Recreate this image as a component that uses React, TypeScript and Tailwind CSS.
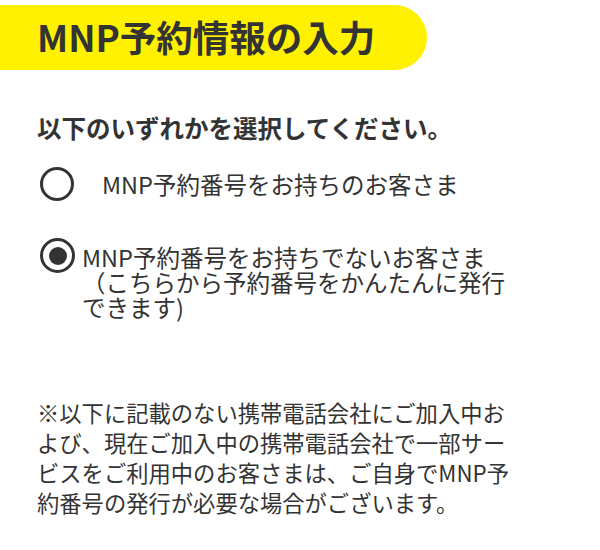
import React from "react";

const font = { fontFamily: '"Noto Sans CJK JP", "Noto Sans", sans-serif' };

export default function App() {
  return (
    <div className="w-[600px] h-[550px] bg-white text-[#333333] overflow-hidden" style={font}>
      <div className="mt-[5px] h-[65px] w-[427px] bg-[#fff100] rounded-r-full flex items-center pl-[37px]">
        <h1 className="text-[36.5px] font-bold leading-none">MNP予約情報の入力</h1>
      </div>

      <p className="mt-[44px] ml-[37px] text-[24.5px] font-bold leading-[28px]">以下のいずれかを選択してください。</p>

      <label className="mt-[25px] ml-[40px] flex items-center">
        <span className="w-[34px] h-[34px] rounded-full border-[3px] border-[#333333] shrink-0" />
        <span className="ml-[28px] text-[23.5px] leading-[28px]">MNP予約番号をお持ちのお客さま</span>
      </label>

      <label className="mt-[37px] ml-[40px] flex items-start">
        <span className="w-[35px] h-[35px] rounded-full border-[3px] border-[#333333] shrink-0 flex items-center justify-center">
          <span className="w-[18px] h-[18px] rounded-full bg-[#333333]" />
        </span>
        <span className="ml-[7px] pt-[7px] text-[23.5px] leading-[25px] whitespace-nowrap">
          MNP予約番号をお持ちでないお客さま
          <br />
          （こちらから予約番号をかんたんに発行
          <br />
          できます)
        </span>
      </label>

      <p className="mt-[77px] ml-[37px] text-[22.3px] leading-[30px] whitespace-nowrap">
        ※以下に記載のない携帯電話会社にご加入中お
        <br />
        よび、現在ご加入中の携帯電話会社で一部サー
        <br />
        ビスをご利用中のお客さまは、ご自身でMNP予
        <br />
        約番号の発行が必要な場合がございます。
      </p>
    </div>
  );
}
